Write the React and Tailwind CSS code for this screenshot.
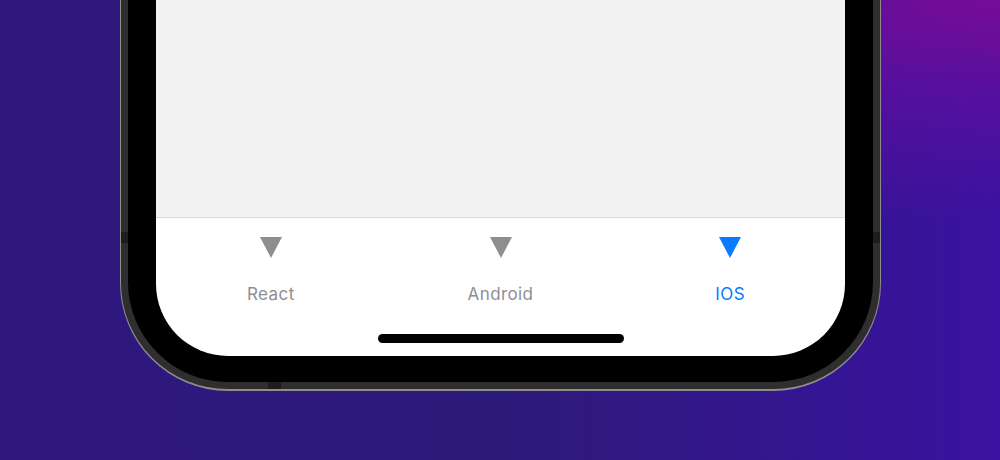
import React from "react";

function Tri({ color }) {
  return (
    <svg width="22" height="21" viewBox="0 0 22 21" className="block">
      <path d="M0 0 L22 0 L11 21 Z" fill={color} />
    </svg>
  );
}

function Tab({ label, active }) {
  const color = active ? "#0a7aff" : "#8e8e8e";
  return (
    <div className="flex-1 flex flex-col items-center pt-[19px]">
      <Tri color={color} />
      <div
        className={
          "mt-[25px] text-[17px] leading-[22px] tracking-[0.4px] font-['Inter',sans-serif] " +
          (active ? "text-[#0a7aff]" : "text-[#8e8e93]")
        }
      >
        {label}
      </div>
    </div>
  );
}

export default function App() {
  return (
    <div className="w-[1000px] h-[460px] overflow-hidden flex flex-col bg-[#2c1a76] bg-[image:radial-gradient(ellipse_120%_80%_at_100%_0%,#760c96_0%,rgba(98,14,160,0.7)_25%,rgba(60,18,162,0)_60%),linear-gradient(to_right,#2f177f,#2c1a78_50%,#3a12a0)]">
      <div className="relative ml-[120px] w-[761px] h-[391px] shrink-0 border-x border-b-2 border-[#8d8d8d] rounded-b-[108px] bg-[#2e2e2e] px-[7px] pb-[7px] flex">
        <div className="absolute left-0 top-[232px] w-[7px] h-[11px] bg-[#1d1d1d]" />
        <div className="absolute right-0 top-[232px] w-[7px] h-[11px] bg-[#1d1d1d]" />
        <div className="absolute bottom-0 left-[147px] w-[13px] h-[7px] bg-[#1d1d1d]" />
        <div className="flex-1 bg-black rounded-b-[100px] px-[28px] pb-[26px] flex">
          <div className="flex-1 rounded-b-[72px] overflow-hidden flex flex-col bg-white">
            <div className="h-[218px] shrink-0 bg-[#f2f2f2] border-b border-[#d9d9d9]" />
            <div className="flex">
              <Tab label="React" />
              <Tab label="Android" />
              <Tab label="IOS" active />
            </div>
            <div className="mt-auto mb-[13px] mx-auto w-[246px] h-[9px] rounded-full bg-black" />
          </div>
        </div>
      </div>
    </div>
  );
}
